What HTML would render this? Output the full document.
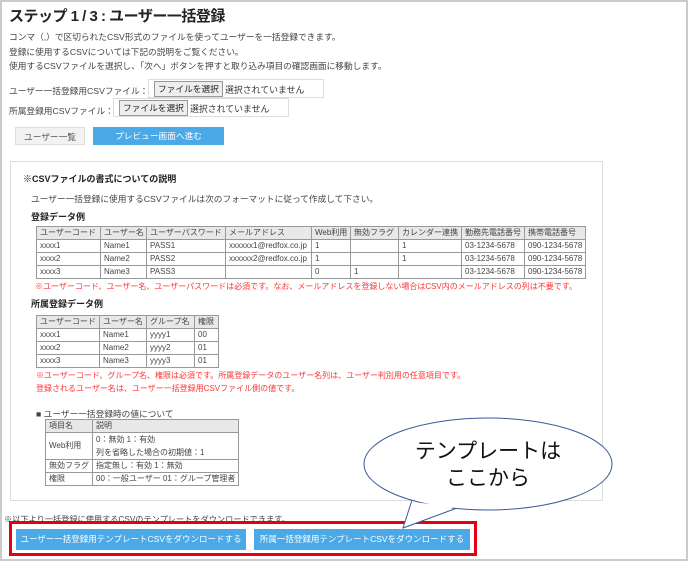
<!DOCTYPE html>
<html><head><meta charset="utf-8"><style>
*{margin:0;padding:0;box-sizing:border-box}
body{width:688px;height:561px;background:#fff;font-family:"Liberation Sans","Noto Sans CJK JP",sans-serif;color:#333;position:relative;overflow:hidden;font-size:9px}
.a{position:absolute;white-space:nowrap}
.frame{position:absolute;left:0;top:0;width:688px;height:561px;border:2px solid #ccc}
h1{position:absolute;left:9px;top:5px;font-size:15px;font-weight:bold;color:#222;letter-spacing:-0.5px}
.fi{position:absolute;height:19px;border:1px solid #ddd;background:#fff}
.fb{position:absolute;top:1px;left:5px;height:16px;border:1px solid #999;background:#eee;font-size:8.7px;padding:0 3px;line-height:14px;color:#222}
.btn{position:absolute;height:18px;font-size:8.7px;text-align:center;line-height:18px}
.box{position:absolute;left:10px;top:161px;width:593px;height:340px;border:1px solid #ddd}
table{position:absolute;border-collapse:collapse;table-layout:fixed;font-size:8px;color:#444}
td{border:1px solid #999;height:13px;padding:0 3px;line-height:12px;white-space:nowrap;overflow:hidden}
tr.h td{background:#e8e8e8}
.red{color:#f33}
.dl{position:absolute;top:529px;height:21px;background:#4aa9e6;color:#fff;font-size:8.5px;line-height:21px;text-align:center;white-space:nowrap;overflow:hidden}
</style></head><body>
<div class="frame"></div>
<h1>ステップ 1 / 3 : ユーザー一括登録</h1>
<div class="a" style="left:9px;top:30px;font-size:8.7px;line-height:14.5px;color:#444">コンマ（,）で区切られたCSV形式のファイルを使ってユーザーを一括登録できます。<br>登録に使用するCSVについては下記の説明をご覧ください。<br>使用するCSVファイルを選択し、「次へ」ボタンを押すと取り込み項目の確認画面に移動します。</div>
<div class="a" style="left:9px;top:84px;font-size:8.7px;color:#444">ユーザー一括登録用CSVファイル：</div>
<div class="fi" style="left:148px;top:79px;width:176px"><span class="fb">ファイルを選択</span><span class="a" style="left:76px;top:3px;font-size:8.9px">選択されていません</span></div>
<div class="a" style="left:9px;top:104px;font-size:8.7px;color:#444">所属登録用CSVファイル：</div>
<div class="fi" style="left:113px;top:98px;width:176px"><span class="fb">ファイルを選択</span><span class="a" style="left:76px;top:3px;font-size:8.9px">選択されていません</span></div>
<div class="btn" style="left:15px;top:127px;width:70px;background:#f2f2f2;border:1px solid #ddd;color:#555">ユーザー一覧</div>
<div class="btn" style="left:93px;top:127px;width:131px;background:#4aa9e6;color:#fff">プレビュー画面へ進む</div>
<div class="box"></div>
<div class="a" style="left:23px;top:172px;font-size:9px;font-weight:bold;color:#222">※CSVファイルの書式についての説明</div>
<div class="a" style="left:31px;top:192px;font-size:8.7px;color:#444">ユーザー一括登録に使用するCSVファイルは次のフォーマットに従って作成して下さい。</div>
<div class="a" style="left:31px;top:210px;font-size:9px;font-weight:bold;color:#222">登録データ例</div>
<table style="left:36px;top:226px;width:549px">
<col style="width:64px"><col style="width:46px"><col style="width:79px"><col style="width:86px"><col style="width:39px"><col style="width:48px"><col style="width:63px"><col style="width:63px"><col style="width:61px">
<tr class="h"><td>ユーザーコード</td><td>ユーザー名</td><td>ユーザーパスワード</td><td>メールアドレス</td><td>Web利用</td><td>無効フラグ</td><td>カレンダー連携</td><td>勤務先電話番号</td><td>携帯電話番号</td></tr>
<tr><td>xxxx1</td><td>Name1</td><td>PASS1</td><td>xxxxxx1@redfox.co.jp</td><td>1</td><td></td><td>1</td><td>03-1234-5678</td><td>090-1234-5678</td></tr>
<tr><td>xxxx2</td><td>Name2</td><td>PASS2</td><td>xxxxxx2@redfox.co.jp</td><td>1</td><td></td><td>1</td><td>03-1234-5678</td><td>090-1234-5678</td></tr>
<tr><td>xxxx3</td><td>Name3</td><td>PASS3</td><td></td><td>0</td><td>1</td><td></td><td>03-1234-5678</td><td>090-1234-5678</td></tr>
</table>
<div class="a red" style="left:35px;top:281px;font-size:8px">※ユーザーコード、ユーザー名、ユーザーパスワードは必須です。なお、メールアドレスを登録しない場合はCSV内のメールアドレスの列は不要です。</div>
<div class="a" style="left:31px;top:297px;font-size:9px;font-weight:bold;color:#222">所属登録データ例</div>
<table style="left:36px;top:315px;width:182px">
<col style="width:63px"><col style="width:47px"><col style="width:48px"><col style="width:24px">
<tr class="h"><td>ユーザーコード</td><td>ユーザー名</td><td>グループ名</td><td>権限</td></tr>
<tr><td>xxxx1</td><td>Name1</td><td>yyyy1</td><td>00</td></tr>
<tr><td>xxxx2</td><td>Name2</td><td>yyyy2</td><td>01</td></tr>
<tr><td>xxxx3</td><td>Name3</td><td>yyyy3</td><td>01</td></tr>
</table>
<div class="a red" style="left:36px;top:369px;font-size:8px;line-height:13px">※ユーザーコード、グループ名、権限は必須です。所属登録データのユーザー名列は、ユーザー判別用の任意項目です。<br>登録されるユーザー名は、ユーザー一括登録用CSVファイル側の値です。</div>
<div class="a" style="left:36px;top:407px;font-size:8.7px;color:#444">■ ユーザー一括登録時の値について</div>
<table style="left:45px;top:419px;width:193px">
<col style="width:47px"><col style="width:146px">
<tr class="h"><td>項目名</td><td>説明</td></tr>
<tr><td>Web利用</td><td style="line-height:13px">0：無効 1：有効<br>列を省略した場合の初期値：1</td></tr>
<tr><td>無効フラグ</td><td>指定無し：有効 1：無効</td></tr>
<tr><td>権限</td><td>00：一般ユーザー 01：グループ管理者</td></tr>
</table>
<div class="a" style="left:4px;top:513px;font-size:8.2px;color:#444">※以下より一括登録に使用するCSVのテンプレートをダウンロードできます。</div>
<div class="a" style="left:9px;top:521px;width:468px;height:35px;border:3px solid #e60012"></div>
<div class="dl" style="left:16px;width:230px">ユーザー一括登録用テンプレートCSVをダウンロードする</div>
<div class="dl" style="left:254px;width:216px">所属一括登録用テンプレートCSVをダウンロードする</div>
<svg class="a" style="left:0;top:0" width="688" height="561">
<path d="M412,500 L403,528 L457,508" fill="#fff" stroke="#3a5a99" stroke-width="1"/>
<ellipse cx="488" cy="464" rx="124" ry="46" fill="#fff" stroke="#3a5a99" stroke-width="1"/>
<path d="M413,502 L405,524 L455,507" fill="#fff" stroke="none"/>
<text x="488" y="458" text-anchor="middle" font-size="21" font-family="Liberation Sans,Noto Sans CJK JP,sans-serif" fill="#111">テンプレートは</text>
<text x="488" y="485" text-anchor="middle" font-size="21" font-family="Liberation Sans,Noto Sans CJK JP,sans-serif" fill="#111">ここから</text>
</svg>
</body></html>
